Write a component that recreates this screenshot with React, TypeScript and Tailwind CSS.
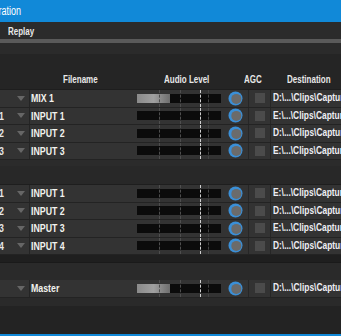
import React from "react";

const font = { fontFamily: '"Liberation Sans", Arial, sans-serif' };

function T({ children, className = "" }: { children: React.ReactNode; className?: string }) {
  return <span className={"inline-block origin-left scale-x-[0.8] whitespace-nowrap " + className}>{children}</span>;
}

function Knob() {
  return (
    <svg width="15" height="15" viewBox="0 0 15 15">
      <circle cx="7.5" cy="7.5" r="7" fill="#3b8fd6" />
      <circle cx="8.3" cy="7.9" r="5" fill="#6b6b6b" />
    </svg>
  );
}

function Meter({ level }: { level: boolean }) {
  return (
    <div className="relative w-[85px] h-full flex items-center">
      <div className="w-[84px] h-[9px] bg-[#0b0b0b] flex">
        {level && (
          <div className="w-[33px] h-full bg-gradient-to-r from-[#8a8a8a] via-[#a0a0a0] to-[#6e6e6e]" />
        )}
      </div>
      <div className="absolute left-[22px] top-0 bottom-0 border-l border-dashed border-[#4e4e4e]" />
      <div className="absolute left-[43px] top-0 bottom-0 border-l border-dashed border-[#4e4e4e]" />
      <div className="absolute left-[63px] top-0 bottom-0 border-l border-dashed border-[#cfcfcf]" />
      <div className="absolute left-[71px] top-0 bottom-0 border-l border-dashed border-[#444]" />
    </div>
  );
}

function Row({ num, name, dest, level }: { num: string; name: string; dest: string; level?: boolean }) {
  return (
    <div className="flex h-[17.5px] bg-[#333333] border-b border-[#232323] items-stretch">
      <div className="w-[17px] flex items-center text-[11px] font-bold text-[#e6e6e6] ml-[-1px]">{num && <T>{num}</T>}</div>
      <div className="w-[12px] flex items-center ml-[1px]">
        <div className="w-0 h-0 border-l-[4px] border-r-[4px] border-t-[5px] border-l-transparent border-r-transparent border-t-[#666]" />
      </div>
      <div className="w-px bg-[#242424]" />
      <div className="w-[107px] flex items-center pl-[1px] text-[11px] font-bold text-[#f2f2ee]"><T>{name}</T></div>
      <Meter level={!!level} />
      <div className="w-[26px] flex items-center justify-center pl-[1px]">
        <Knob />
      </div>
      <div className="w-px bg-[#262626]" />
      <div className="w-[21px] flex items-center justify-center">
        <div className="w-[10px] h-[10px] bg-[#4b4b4b]" />
      </div>
      <div className="w-px bg-[#262626]" />
      <div className="flex-1 flex items-center pl-[2px] text-[10.5px] font-bold text-[#eeeef4] overflow-hidden"><T>{dest}</T></div>
    </div>
  );
}

export default function App() {
  return (
    <div className="w-[341px] h-[336px] bg-[#232323] flex flex-col overflow-hidden" style={font}>
      <div className="h-[22px] bg-[#1189d8] flex items-center shrink-0 overflow-hidden">
        <span className="inline-block origin-left scale-x-[0.75] text-[12px] text-white whitespace-nowrap ml-[-64px]">Record Configuration</span>
      </div>
      <div className="h-[17px] bg-[#2b2b2b] flex items-center shrink-0 pl-[8px] pt-[2px]">
        <T className="text-[10px] font-bold text-[#e8e8e8]">Replay</T>
      </div>
      <div className="h-[4px] bg-[#5a5a5a] shrink-0" />
      <div className="h-[11px] bg-[#2b2b2b] shrink-0" />
      <div className="h-[35px] bg-[#252525] shrink-0 flex items-end pb-[2px] text-[10px] font-bold text-[#e8e8e8]">
        <div className="w-[167px] pl-[63px]"><T>Filename</T></div>
        <div className="w-[82px]"><T>Audio Level</T></div>
        <div className="w-[44px]"><T>AGC</T></div>
        <div className="flex-1"><T>Destination</T></div>
      </div>
      <div className="shrink-0 border-t border-[#1e1e1e]">
        <Row num="" name="MIX 1" dest="D:\...\Clips\Capture" level />
        <Row num="1" name="INPUT 1" dest="E:\...\Clips\Capture" />
        <Row num="2" name="INPUT 2" dest="D:\...\Clips\Capture" />
        <Row num="3" name="INPUT 3" dest="E:\...\Clips\Capture" />
      </div>
      <div className="h-[6px] bg-[#2b2b2b] shrink-0" />
      <div className="h-[18px] bg-[#282828] shrink-0" />
      <div className="shrink-0 border-t border-[#1e1e1e]">
        <Row num="1" name="INPUT 1" dest="E:\...\Clips\Capture" />
        <Row num="2" name="INPUT 2" dest="D:\...\Clips\Capture" />
        <Row num="3" name="INPUT 3" dest="E:\...\Clips\Capture" />
        <Row num="4" name="INPUT 4" dest="D:\...\Clips\Capture" />
      </div>
      <div className="h-[7px] bg-[#1f1f1f] shrink-0" />
      <div className="h-[18px] bg-[#2a2a2a] shrink-0 border-t border-[#1a1a1a]" />
      <div className="shrink-0">
        <Row num="" name="Master" dest="D:\...\Clips\Capture" level />
      </div>
      <div className="h-[8px] bg-[#2a2a2a] shrink-0" />
      <div className="flex-1 bg-[#232323]" />
      <div className="h-[2px] bg-[#1189d8] shrink-0" />
    </div>
  );
}
